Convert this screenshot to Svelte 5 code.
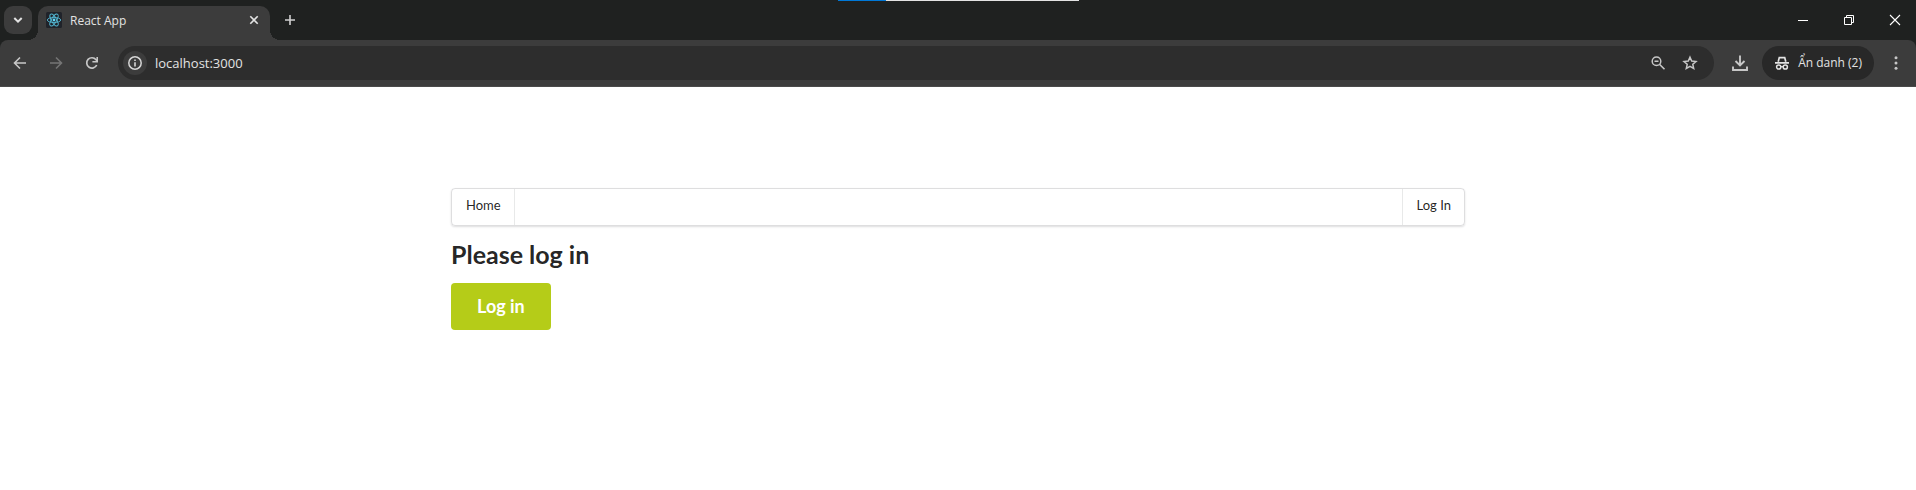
<script>
  let address = $state('localhost:3000');
</script>

<div class="browser">
  <header class="tabstrip">
    <div class="progress"><span></span></div>
    <button class="search-tabs" aria-label="Search tabs">
      <svg width="10" height="8" viewBox="0 0 10 8"><path d="M1.3 2 5 5.7 8.7 2" stroke="#e3e3e3" stroke-width="2" fill="none" /></svg>
    </button>
    <div class="tab">
      <svg class="favicon" width="16" height="16" viewBox="0 0 16 16">
        <rect width="16" height="16" rx="1.5" fill="#20232a" />
        <g fill="none" stroke="#53b8d3" stroke-width="0.9">
          <ellipse cx="8" cy="8" rx="6.7" ry="2.6" />
          <ellipse cx="8" cy="8" rx="6.7" ry="2.6" transform="rotate(60 8 8)" />
          <ellipse cx="8" cy="8" rx="6.7" ry="2.6" transform="rotate(120 8 8)" />
        </g>
        <circle cx="8" cy="8" r="1.4" fill="#61dafb" />
      </svg>
      <span class="tab-title">React App</span>
      <button class="plain" aria-label="Close tab">
        <svg width="16" height="16" viewBox="0 0 16 16"><path d="m4.3 4.3 7.4 7.4m0-7.4-7.4 7.4" stroke="#e3e3e3" stroke-width="1.6" /></svg>
      </button>
    </div>
    <button class="plain new-tab" aria-label="New tab">
      <svg width="16" height="16" viewBox="0 0 16 16"><path d="M3 8h10M8 3v10" stroke="#d0d0d0" stroke-width="1.6" /></svg>
    </button>
    <div class="window-controls">
      <button class="plain" aria-label="Minimize"><svg width="16" height="16" viewBox="0 0 16 16"><path d="M3 8.500h10" stroke="#fff" /></svg></button>
      <button class="plain" aria-label="Restore"><svg width="16" height="16" viewBox="0 0 16 16"><path d="M3.500 5.500h7v7h-7zM5.500 5.500v-2h7v7h-2" stroke="#fff" fill="none" /></svg></button>
      <button class="plain" aria-label="Close"><svg width="16" height="16" viewBox="0 0 16 16"><path d="m3 3 10 10M13 3 3 13" stroke="#fff" stroke-width="1.1" /></svg></button>
    </div>
  </header>

  <div class="toolbar">
    <div class="nav">
      <button class="plain" aria-label="Back"><svg width="16" height="16" viewBox="0 0 16 16"><path d="M14 8H3M8 2.500 2.500 8 8 13.500" stroke="#c7c7c7" stroke-width="1.6" fill="none" /></svg></button>
      <button class="plain" aria-label="Forward" disabled><svg width="16" height="16" viewBox="0 0 16 16"><path d="M2 8h11M8 2.500 13.500 8 8 13.500" stroke="#757575" stroke-width="1.6" fill="none" /></svg></button>
      <button class="plain" aria-label="Reload"><svg width="16" height="16" viewBox="0 0 16 16"><path d="M12.700 10A5.200 5.200 0 1 1 12 4.700L13.300 6" stroke="#c7c7c7" stroke-width="1.700" fill="none" /><path d="M13.200 2v4.800H8.400" stroke="#c7c7c7" stroke-width="1.600" fill="none" /></svg></button>
    </div>
    <div class="omnibox">
      <button class="site-info" aria-label="View site information">
        <svg width="16" height="16" viewBox="0 0 16 16"><circle cx="8" cy="8" r="6.200" fill="none" stroke="#d6d6d6" stroke-width="1.500" /><path d="M8 7.200v4.200M8 4.500v1.600" stroke="#d6d6d6" stroke-width="1.600" /></svg>
      </button>
      <input class="address" aria-label="Address" spellcheck="false" bind:value={address} />
      <button class="plain" aria-label="Zoom"><svg width="16" height="16" viewBox="0 0 16 16"><circle cx="6.500" cy="6.300" r="4.300" fill="none" stroke="#c7c7c7" stroke-width="1.500" /><path d="M4.500 6.300h4M9.700 9.500l4.800 4.800" stroke="#c7c7c7" stroke-width="1.600" /></svg></button>
      <button class="plain" aria-label="Bookmark this tab"><svg width="16" height="16" viewBox="0 0 16 16"><path d="m8 2.200 1.700 3.900 4.300.4-3.200 2.800.9 4.200L8 11.300l-3.700 2.200.9-4.200L2 6.500l4.300-.4z" fill="none" stroke="#c7c7c7" stroke-width="1.500" /></svg></button>
    </div>
    <button class="plain download" aria-label="Downloads"><svg width="18" height="18" viewBox="0 0 18 18"><path d="M9 1.500V11M4.500 7 9 11.500 13.500 7M2 12.500V16h14v-3.500" fill="none" stroke="#c7c7c7" stroke-width="1.900" /></svg></button>
    <button class="incognito">
      <svg width="16" height="16" viewBox="0 0 16 16"><path d="M4.200 6.800 5.300 2.600h5.400l1.100 4.200M1 7.800h14" fill="none" stroke="#e3e3e3" stroke-width="1.700" /><circle cx="4.700" cy="12" r="2.100" fill="none" stroke="#e3e3e3" stroke-width="1.500" /><circle cx="11.300" cy="12" r="2.100" fill="none" stroke="#e3e3e3" stroke-width="1.500" /><path d="M6.700 11.700h2.600" stroke="#e3e3e3" stroke-width="1.300" /></svg>
      <span>Ẩn danh (2)</span>
    </button>
    <button class="plain more" aria-label="Menu"><svg width="16" height="16" viewBox="0 0 16 16" fill="#c7c7c7"><circle cx="8" cy="2.800" r="1.500" /><circle cx="8" cy="8" r="1.500" /><circle cx="8" cy="13.200" r="1.500" /></svg></button>
  </div>
</div>

<main>
  <nav class="menu">
    <a class="item" href="#home">Home</a>
    <a class="item right" href="#login">Log In</a>
  </nav>
  <h1>Please log in</h1>
  <button class="login">Log in</button>
</main>

<style>
  :global(body) { background: #fff; }
  button, input { font: inherit; border: 0; padding: 0; margin: 0; color: inherit; }
  button { cursor: pointer; }
  svg { display: block; flex: none; }
  .browser { background: #1f2120; color: #e3e3e3; font: 12px/16px "Open Sans", "Noto Sans", sans-serif; }
  .plain { background: none; flex: none; }
  .tabstrip { position: relative; display: flex; align-items: center; height: 40px; padding-left: 4px; }
  .progress { position: absolute; top: 0; left: 838px; width: 241px; height: 1px; background: #e3e3e3; }
  .progress span { display: block; width: 20%; height: 1px; background: #0078d7; }
  .search-tabs { width: 28px; height: 28px; border-radius: 9px; background: #3c3c3c; display: flex; align-items: center; justify-content: center; }
  .tab { position: relative; align-self: flex-end; display: flex; align-items: center; gap: 8px; box-sizing: border-box; width: 232px; height: 34px; margin-left: 6px; padding: 0 8px 6px; border-radius: 10px 10px 0 0; background: #3c3c3c; }
  .tab::before, .tab::after { content: ""; position: absolute; bottom: 0; width: 10px; height: 10px; }
  .tab::before { right: 100%; background: radial-gradient(circle at 0 0, transparent 10px, #3c3c3c 10px); }
  .tab::after { left: 100%; background: radial-gradient(circle at 100% 0, transparent 10px, #3c3c3c 10px); }
  .tab-title { flex: 1; padding-top: 2px; }
  .new-tab { margin-left: 12px; }
  .window-controls { display: flex; gap: 30px; margin-left: auto; padding-right: 13px; }
  .toolbar { display: flex; align-items: center; box-sizing: border-box; height: 47px; padding: 0 12px; background: #3c3c3c; border-bottom: 1px solid #4a4a4a; border-radius: 8px 8px 0 0; }
  .nav { display: flex; gap: 20px; margin-right: 18px; }
  .omnibox { flex: 1; display: flex; align-items: center; gap: 16px; height: 34px; padding: 0 16px 0 5px; border-radius: 17px; background: #2d2d2d; }
  .site-info { flex: none; display: flex; align-items: center; justify-content: center; width: 24px; height: 24px; border-radius: 50%; background: #3c3c3c; }
  .address { flex: 1; min-width: 0; margin-left: -8px; background: none; outline: none; font-size: 13px; line-height: 20px; }
  .download { margin: 0 13px 0 17px; }
  .incognito { display: flex; align-items: center; gap: 8px; height: 34px; padding: 0 12px; border-radius: 17px; background: #282828; white-space: nowrap; }
  .more { margin-left: 14px; }
  main { box-sizing: border-box; max-width: 1014px; margin: 0 auto; padding-top: 101px; font-family: Lato, sans-serif; color: rgba(0, 0, 0, 0.87); }
  .menu { display: flex; box-sizing: border-box; height: 38px; border: 1px solid rgba(34, 36, 38, 0.15); border-radius: 4px; box-shadow: 0 1px 2px rgba(34, 36, 38, 0.15); font-size: 13px; line-height: 16px; }
  .item { padding: 8px 13px 10px 14px; border-right: 1px solid rgba(34, 36, 38, 0.1); color: inherit; text-decoration: none; }
  .item.right { margin-left: auto; border-right: 0; border-left: 1px solid rgba(34, 36, 38, 0.1); }
  h1 { margin: 12px 0 13px; font-size: 25px; line-height: 32px; font-weight: 700; }
  .login { padding: 12px 26px; border-radius: 4px; background: #b5cc18; color: #fff; font-size: 18px; line-height: 23px; font-weight: 700; }
</style>
